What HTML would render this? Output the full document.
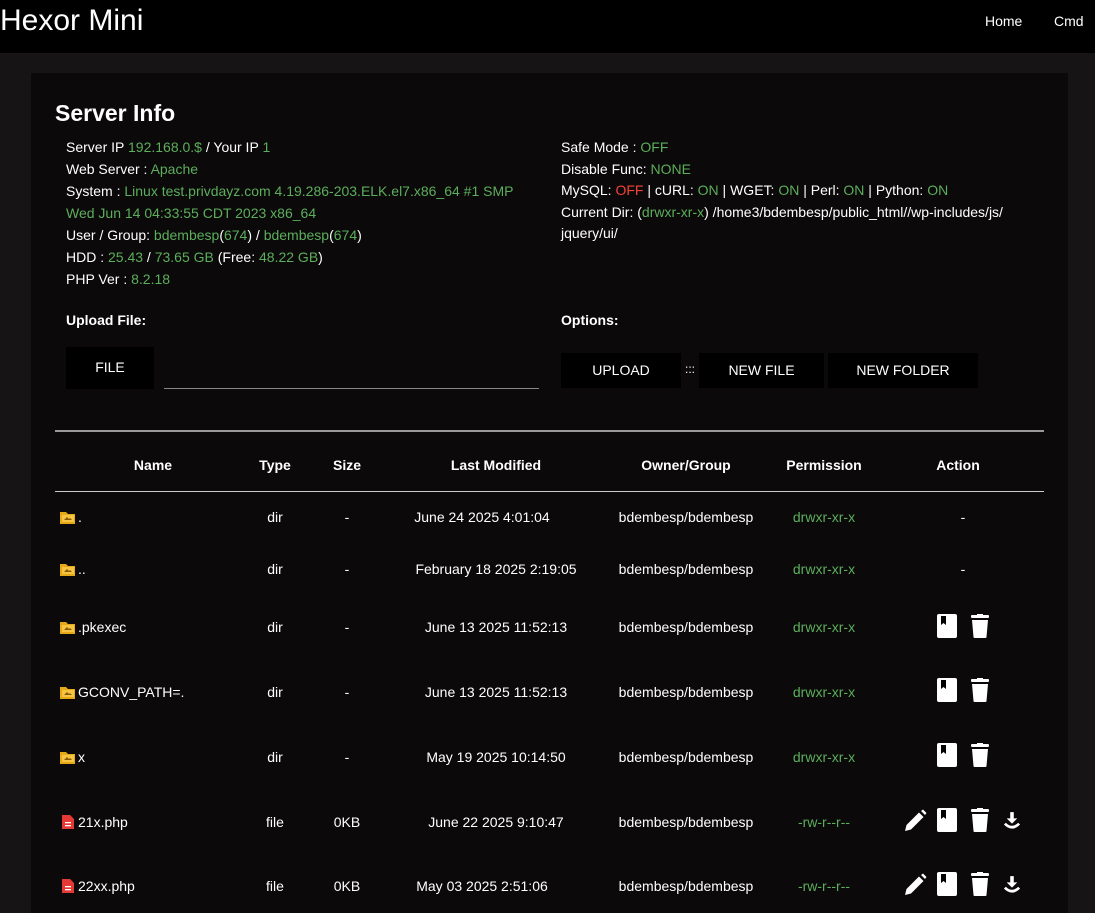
<!DOCTYPE html>
<html><head><meta charset="utf-8"><style>
*{margin:0;padding:0;box-sizing:border-box}
body{width:1095px;height:909px;background:#161415;font-family:"Liberation Sans",Arial,sans-serif;color:#fff;position:relative;overflow:hidden;font-size:14px}
.a{position:absolute;white-space:nowrap}
.g{color:#5cae5c}.r{color:#f44336}
nav{position:absolute;left:0;top:0;width:1095px;height:53px;background:#000}
.card{position:absolute;left:31px;top:73px;width:1037px;height:840px;background:#0b0909}
.btn{position:absolute;background:#000;color:#fff;font-size:14px;text-align:center}
.hr{position:absolute;left:55px;width:989px;background:#999}
.c{position:absolute;transform:translateX(-50%);white-space:nowrap;font-size:14px}
.th{font-weight:bold}
svg{display:inline-block;vertical-align:middle}
</style></head><body>
<nav>
<div class="a" style="left:0;top:4px;font-size:30px">Hexor Mini</div>
<div class="a" style="left:985px;top:13px;font-size:14px">Home</div>
<div class="a" style="left:1054px;top:13px;font-size:14px">Cmd</div>
</nav>
<div class="card"></div>
<div class="a" style="left:55px;top:100px;font-size:23px;font-weight:bold">Server Info</div>
<div class="a" style="left:66px;top:136px;line-height:22px;font-size:14px">
Server IP <span class="g">192.168.0.$</span> / Your IP <span class="g">1</span><br>
Web Server : <span class="g">Apache</span><br>
System : <span class="g">Linux test.privdayz.com 4.19.286-203.ELK.el7.x86_64 #1 SMP</span><br>
<span class="g">Wed Jun 14 04:33:55 CDT 2023 x86_64</span><br>
User / Group: <span class="g">bdembesp</span>(<span class="g">674</span>) / <span class="g">bdembesp</span>(<span class="g">674</span>)<br>
HDD : <span class="g">25.43</span> / <span class="g">73.65 GB</span> (Free: <span class="g">48.22 GB</span>)<br>
PHP Ver : <span class="g">8.2.18</span></div>
<div class="a" style="left:561px;top:137px;line-height:21.5px;font-size:14px">
Safe Mode : <span class="g">OFF</span><br>
Disable Func: <span class="g">NONE</span><br>
MySQL: <span class="r">OFF</span> | cURL: <span class="g">ON</span> | WGET: <span class="g">ON</span> | Perl: <span class="g">ON</span> | Python: <span class="g">ON</span><br>
Current Dir: (<span class="g">drwxr-xr-x</span>) /home3/bdembesp/public_html//wp-includes/js/<br>jquery/ui/</div>
<div class="a" style="left:66px;top:312px;font-weight:bold">Upload File:</div>
<div class="a" style="left:561px;top:312px;font-weight:bold">Options:</div>
<div class="btn" style="left:66px;top:347px;width:88px;height:42px;line-height:40px">FILE</div>
<div class="a" style="left:164px;top:388px;width:375px;height:1px;background:#888"></div>
<div class="btn" style="left:561px;top:353px;width:120px;height:35px;line-height:35px">UPLOAD</div>
<div class="a" style="left:685px;top:362px;font-size:12px">:::</div>
<div class="btn" style="left:699px;top:353px;width:125px;height:35px;line-height:35px">NEW FILE</div>
<div class="btn" style="left:828px;top:353px;width:150px;height:35px;line-height:35px">NEW FOLDER</div>
<div class="hr" style="top:430px;height:2px"></div>
<div class="hr" style="top:491px;height:1px;background:#ccc"></div>
<div class="c th" style="left:153px;top:457px">Name</div>
<div class="c th" style="left:275px;top:457px">Type</div>
<div class="c th" style="left:347px;top:457px">Size</div>
<div class="c th" style="left:496px;top:457px">Last Modified</div>
<div class="c th" style="left:686px;top:457px">Owner/Group</div>
<div class="c th" style="left:824px;top:457px">Permission</div>
<div class="c th" style="left:958px;top:457px">Action</div>
<svg width="0" height="0" style="position:absolute"><defs>
<symbol id="fold" viewBox="0 0 16 14"><path d="M0 1h6l2 2h7v10H0z" fill="#e6a817"/><rect x="2" y="4" width="12" height="7" fill="#f5c542"/><path d="M4 9l3-3 2 2 1-1 2 2z" fill="#8a5a00"/></symbol>
<symbol id="file" viewBox="0 0 12 14"><path d="M0 0h8l4 4v10H0z" fill="#e53935"/><rect x="3" y="7" width="6" height="1.3" fill="#fff"/><rect x="3" y="10" width="6" height="1.3" fill="#fff"/></symbol>
<symbol id="book" viewBox="0 0 20 24"><rect x="0" y="0" width="20" height="24" rx="2" fill="#fff"/><path d="M4 2h5v9l-2.5-2-2.5 2z" fill="#000"/></symbol>
<symbol id="trash" viewBox="0 0 18 24"><rect x="0" y="1" width="18" height="3" rx="1" fill="#fff"/><rect x="6" y="0" width="6" height="2" fill="#fff"/><path d="M1 6h16l-1.5 17a1 1 0 0 1-1 1h-11a1 1 0 0 1-1-1z" fill="#fff"/></symbol>
<symbol id="pen" viewBox="0 0 24 24"><path d="M2 22l1.5-6L16 3.5l4.5 4.5L8 20.5z M18 2l2-1.5 3.5 3.5L22 6z" fill="#fff"/></symbol>
<symbol id="dl" viewBox="0 0 18 20"><path d="M7 0h4v7h4l-6 6-6-6h4z" fill="#fff"/><path d="M1 13q8 8 16 0" stroke="#fff" stroke-width="3" fill="none"/></symbol>
</defs></svg>
<div class="a" style="left:60px;top:509px"><svg width="16" height="14"><use href="#fold"/></svg></div><div class="a" style="left:78px;top:509px">.</div>
<div class="c" style="left:275px;top:509px">dir</div><div class="c" style="left:347px;top:509px">-</div><div class="c" style="left:482px;top:509px">June 24 2025 4:01:04</div><div class="c" style="left:686px;top:509px">bdembesp/bdembesp</div><div class="c g" style="left:824px;top:509px">drwxr-xr-x</div><div class="c" style="left:963px;top:509px">-</div>

<div class="a" style="left:60px;top:561px"><svg width="16" height="14"><use href="#fold"/></svg></div><div class="a" style="left:78px;top:561px">..</div>
<div class="c" style="left:275px;top:561px">dir</div><div class="c" style="left:347px;top:561px">-</div><div class="c" style="left:496px;top:561px">February 18 2025 2:19:05</div><div class="c" style="left:686px;top:561px">bdembesp/bdembesp</div><div class="c g" style="left:824px;top:561px">drwxr-xr-x</div><div class="c" style="left:963px;top:561px">-</div>

<div class="a" style="left:60px;top:619px"><svg width="16" height="14"><use href="#fold"/></svg></div><div class="a" style="left:78px;top:619px">.pkexec</div>
<div class="c" style="left:275px;top:619px">dir</div><div class="c" style="left:347px;top:619px">-</div><div class="c" style="left:496px;top:619px">June 13 2025 11:52:13</div><div class="c" style="left:686px;top:619px">bdembesp/bdembesp</div><div class="c g" style="left:824px;top:619px">drwxr-xr-x</div>
<div class="a" style="left:937px;top:614px"><svg width="20" height="24"><use href="#book"/></svg></div><div class="a" style="left:971px;top:614px"><svg width="18" height="24"><use href="#trash"/></svg></div>

<div class="a" style="left:60px;top:684px"><svg width="16" height="14"><use href="#fold"/></svg></div><div class="a" style="left:78px;top:684px">GCONV_PATH=.</div>
<div class="c" style="left:275px;top:684px">dir</div><div class="c" style="left:347px;top:684px">-</div><div class="c" style="left:496px;top:684px">June 13 2025 11:52:13</div><div class="c" style="left:686px;top:684px">bdembesp/bdembesp</div><div class="c g" style="left:824px;top:684px">drwxr-xr-x</div>
<div class="a" style="left:937px;top:678px"><svg width="20" height="24"><use href="#book"/></svg></div><div class="a" style="left:971px;top:678px"><svg width="18" height="24"><use href="#trash"/></svg></div>

<div class="a" style="left:60px;top:749px"><svg width="16" height="14"><use href="#fold"/></svg></div><div class="a" style="left:78px;top:749px">x</div>
<div class="c" style="left:275px;top:749px">dir</div><div class="c" style="left:347px;top:749px">-</div><div class="c" style="left:496px;top:749px">May 19 2025 10:14:50</div><div class="c" style="left:686px;top:749px">bdembesp/bdembesp</div><div class="c g" style="left:824px;top:749px">drwxr-xr-x</div>
<div class="a" style="left:937px;top:743px"><svg width="20" height="24"><use href="#book"/></svg></div><div class="a" style="left:971px;top:743px"><svg width="18" height="24"><use href="#trash"/></svg></div>

<div class="a" style="left:62px;top:813px"><svg width="12" height="14"><use href="#file"/></svg></div><div class="a" style="left:78px;top:814px">21x.php</div>
<div class="c" style="left:275px;top:814px">file</div><div class="c" style="left:347px;top:814px">0KB</div><div class="c" style="left:496px;top:814px">June 22 2025 9:10:47</div><div class="c" style="left:686px;top:814px">bdembesp/bdembesp</div><div class="c g" style="left:824px;top:814px">-rw-r--r--</div>
<div class="a" style="left:903px;top:809px"><svg width="24" height="24"><use href="#pen"/></svg></div><div class="a" style="left:937px;top:808px"><svg width="20" height="24"><use href="#book"/></svg></div><div class="a" style="left:971px;top:808px"><svg width="18" height="24"><use href="#trash"/></svg></div><div class="a" style="left:1004px;top:812px"><svg width="16" height="18"><use href="#dl"/></svg></div>

<div class="a" style="left:62px;top:877px"><svg width="12" height="14"><use href="#file"/></svg></div><div class="a" style="left:78px;top:878px">22xx.php</div>
<div class="c" style="left:275px;top:878px">file</div><div class="c" style="left:347px;top:878px">0KB</div><div class="c" style="left:482px;top:878px">May 03 2025 2:51:06</div><div class="c" style="left:686px;top:878px">bdembesp/bdembesp</div><div class="c g" style="left:824px;top:878px">-rw-r--r--</div>
<div class="a" style="left:903px;top:873px"><svg width="24" height="24"><use href="#pen"/></svg></div><div class="a" style="left:937px;top:872px"><svg width="20" height="24"><use href="#book"/></svg></div><div class="a" style="left:971px;top:872px"><svg width="18" height="24"><use href="#trash"/></svg></div><div class="a" style="left:1004px;top:876px"><svg width="16" height="18"><use href="#dl"/></svg></div>
</body></html>
